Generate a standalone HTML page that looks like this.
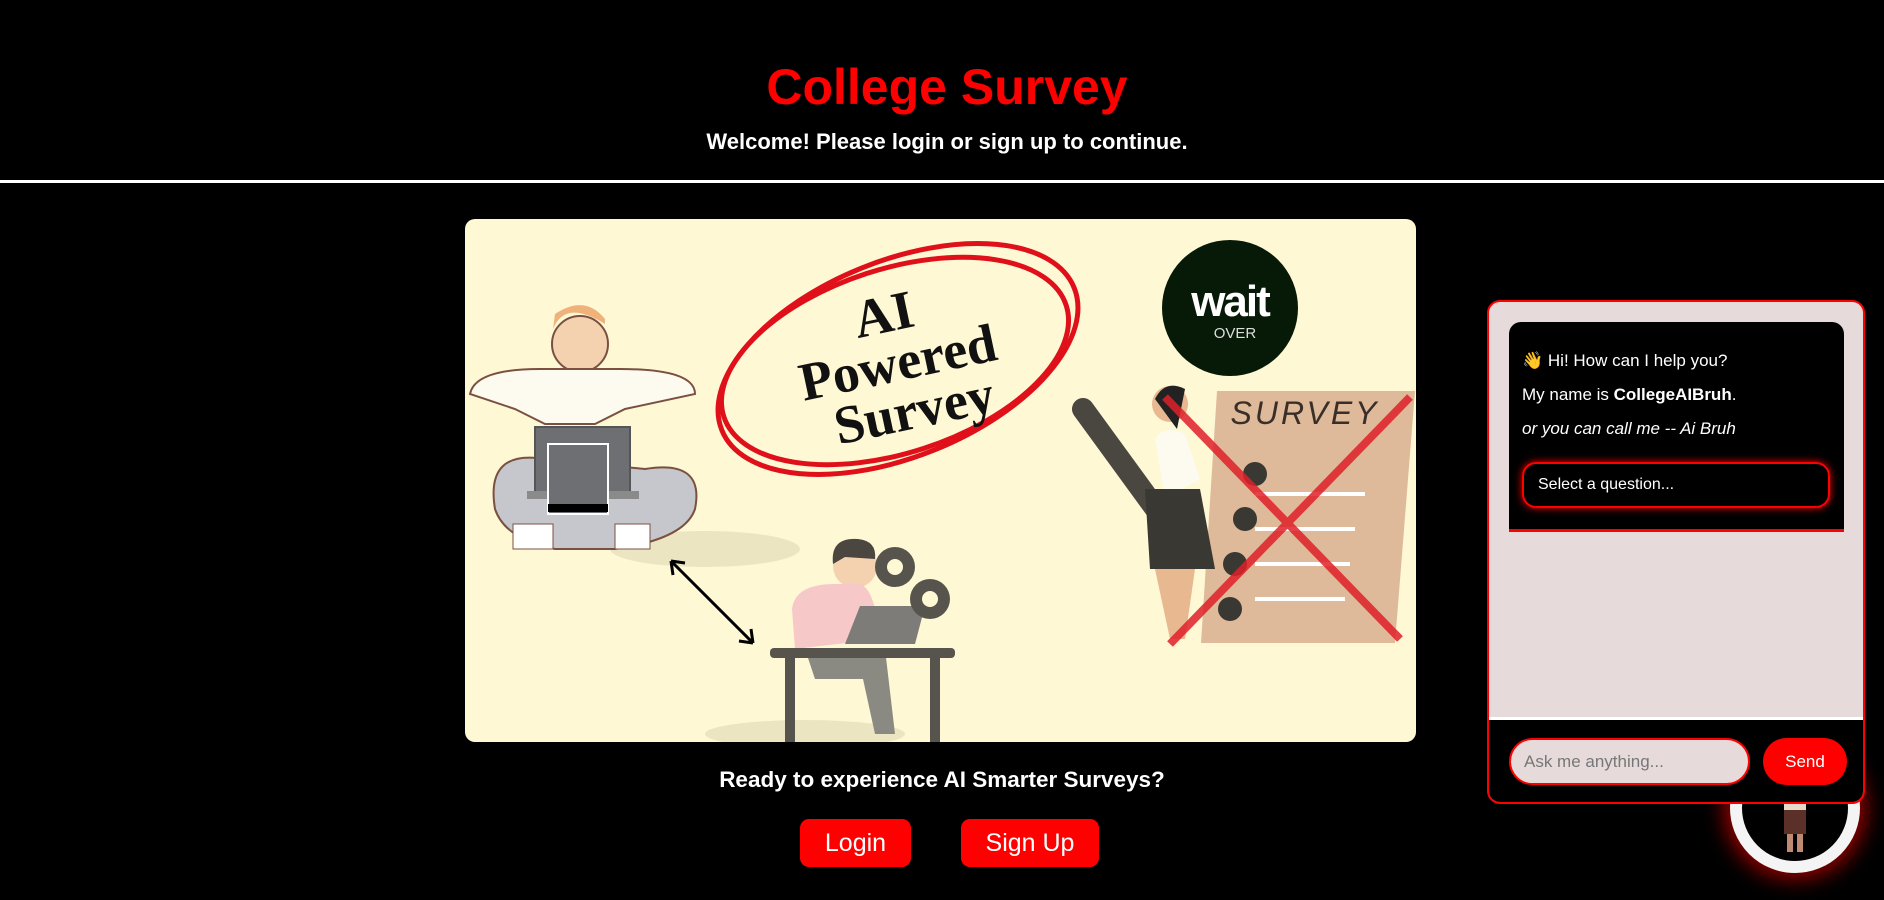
<!DOCTYPE html>
<html><head><meta charset="utf-8"><style>
*{margin:0;padding:0;box-sizing:border-box}
body{width:1884px;height:900px;background:#000;font-family:"Liberation Sans",Arial,sans-serif;position:relative;overflow:hidden;color:#fff}
.abs{position:absolute}
h1{position:absolute;left:5px;width:1884px;top:58px;text-align:center;color:#f00;font-size:50px;font-weight:bold}
.sub{left:5px;width:1884px;top:129px;text-align:center;font-size:22px;font-weight:bold}
.line{left:0;width:1884px;top:180px;height:3px;background:#fff}
.img{left:465px;top:219px;width:951px;height:523px;background:#fef8d5;border-radius:10px;overflow:hidden}
.ready{left:0;width:1884px;top:767px;text-align:center;font-size:22.5px;font-weight:bold}
.btn{background:#f00;color:#fff;font-size:25px;border-radius:9px;text-align:center;line-height:49px;height:48px;top:819px}
.chat{left:1487px;top:300px;width:378px;height:504px;border:2px solid #f00;border-radius:13px;background:#e6dada;overflow:hidden}
.inner{position:absolute;left:20px;top:20px;width:335px;height:210px;background:#000;border-radius:12px 12px 0 0;border-bottom:3px solid #f00;padding:22px 14px 0 13px;font-size:17px;line-height:34px}
.sel{margin-top:16px;height:46px;border:2px solid #f00;border-radius:14px;box-shadow:0 0 8px #f00;font-size:16px;line-height:42px;padding-left:14px}
.bot{position:absolute;left:0;top:415px;width:100%;height:90px;background:#000;border-top:3px solid #fff}
.inp{position:absolute;left:20px;top:18px;width:241px;height:47px;background:#e6dada;border:2px solid #f00;border-radius:24px;color:#777;font-size:17px;line-height:43px;padding-left:13px}
.send{position:absolute;left:274px;top:18px;width:84px;height:47px;background:#f00;border-radius:24px;font-size:17px;line-height:47px;text-align:center}
.av{left:1730px;top:743px;width:130px;height:130px;border-radius:50%;border:12px solid #f4f4f4;background:#000;box-shadow:0 0 20px 6px rgba(255,0,0,.6)}
</style></head><body>
<h1>College Survey</h1>
<div class="abs sub">Welcome! Please login or sign up to continue.</div>
<div class="abs line"></div>
<div class="abs img">
<svg width="951" height="523" viewBox="0 0 951 523">
<ellipse cx="240" cy="330" rx="95" ry="18" fill="#ece5c2"/>
<ellipse cx="340" cy="515" rx="100" ry="14" fill="#ece5c2"/>
<circle cx="115" cy="125" r="28" fill="#f4d2b0" stroke="#7a5040" stroke-width="2"/>
<path d="M88 110 Q100 80 140 105 L140 100 Q120 75 90 95Z" fill="#f0b27a"/>
<path d="M5 175 Q10 150 75 150 L155 150 Q230 150 230 175 L160 190 L130 205 L80 205 L50 190Z" fill="#fdfaf0" stroke="#7a5040" stroke-width="2"/>
<path d="M30 290 Q20 230 80 240 L180 250 Q240 240 230 290 Q220 320 150 330 L90 330 Q40 320 30 290Z" fill="#c5c7cc" stroke="#7a5040" stroke-width="2"/>
<rect x="70" y="208" width="95" height="65" fill="#6d6f72" stroke="#555" stroke-width="2"/>
<rect x="62" y="272" width="112" height="8" fill="#8a8a8a"/>
<rect x="83" y="225" width="60" height="70" fill="#6d6f72" stroke="#fff" stroke-width="2"/>
<rect x="83" y="285" width="60" height="8" fill="#000"/>
<rect x="48" y="305" width="40" height="25" fill="#fff" stroke="#7a5040"/>
<rect x="150" y="305" width="35" height="25" fill="#fff" stroke="#7a5040"/>
<path d="M206 342 L288 424 M206 342 L208 356 M206 342 L220 344 M288 424 L286 410 M288 424 L274 422" stroke="#000" stroke-width="3" fill="none"/>
<g fill="none" stroke="#e0101a" stroke-width="5">
<ellipse cx="433" cy="140" rx="190" ry="98" transform="rotate(-22 433 140)"/>
<ellipse cx="430" cy="142" rx="180" ry="92" transform="rotate(-18 430 142)"/>
</g>
<g font-family="Liberation Serif,serif" font-size="54" font-weight="bold" fill="#111" text-anchor="middle" transform="rotate(-12 430 140)">
<text x="428" y="112">AI</text>
<text x="432" y="162">Powered</text>
<text x="438" y="212">Survey</text>
</g>
<circle cx="765" cy="89" r="68" fill="#071a07"/>
<text x="765" y="97" text-anchor="middle" font-size="44" font-weight="bold" fill="#fff" letter-spacing="-2">wait</text>
<text x="770" y="119" text-anchor="middle" font-size="15" fill="#ddd">OVER</text>
<circle cx="390" cy="347" r="22" fill="#f4d2b0"/>
<path d="M368 345 Q365 318 393 320 Q412 322 410 340 L380 338Z" fill="#4b4640"/>
<path d="M327 390 Q330 365 370 365 L395 365 Q410 370 415 420 L330 430Z" fill="#f7c8c8"/>
<path d="M340 430 L420 430 L430 515 L410 515 L398 460 L350 460Z" fill="#8a8a82"/>
<rect x="305" y="429" width="185" height="10" rx="4" fill="#56544d"/>
<rect x="320" y="439" width="10" height="84" fill="#56544d"/>
<rect x="465" y="439" width="10" height="84" fill="#56544d"/>
<path d="M395 387 L460 387 L450 425 L380 425Z" fill="#7d7c78"/>
<g fill="#56544d"><circle cx="430" cy="348" r="20"/><circle cx="465" cy="380" r="20"/></g>
<g fill="#fef8d5"><circle cx="430" cy="348" r="8"/><circle cx="465" cy="380" r="8"/></g>
<path d="M752 172 L950 172 L930 424 L736 424Z" fill="#deba9a"/>
<text x="840" y="205" text-anchor="middle" font-size="32" fill="#3a2f28" letter-spacing="3" font-style="italic">SURVEY</text>
<g stroke="#fff" stroke-width="4"><line x1="790" y1="275" x2="900" y2="275"/><line x1="790" y1="310" x2="890" y2="310"/><line x1="790" y1="345" x2="885" y2="345"/><line x1="790" y1="380" x2="880" y2="380"/></g>
<path d="M618 190 L720 330" stroke="#4a4640" stroke-width="22" stroke-linecap="round"/>
<path d="M690 220 Q700 205 720 215 L735 260 L700 280Z" fill="#fdfaf0"/>
<path d="M680 270 L735 270 L750 350 L685 350Z" fill="#3a3832"/>
<path d="M690 350 L705 420 L720 420 L730 350Z" fill="#e8b891"/>
<circle cx="705" cy="185" r="18" fill="#e8b891"/>
<path d="M690 180 Q700 160 720 170 L712 210Z" fill="#222"/>
<g fill="#3a3832"><circle cx="790" cy="255" r="12"/><circle cx="780" cy="300" r="12"/><circle cx="770" cy="345" r="12"/><circle cx="765" cy="390" r="12"/></g>
<g stroke="#e0202a" stroke-width="8" opacity=".85"><line x1="700" y1="178" x2="935" y2="420"/><line x1="945" y1="178" x2="705" y2="425"/></g>
</svg>
</div>
<div class="abs ready">Ready to experience AI Smarter Surveys?</div>
<div class="abs btn" style="left:800px;width:111px">Login</div>
<div class="abs btn" style="left:961px;width:138px">Sign Up</div>
<div class="abs av"><svg width="106" height="106" viewBox="0 0 106 106"><circle cx="53" cy="24" r="9" fill="#b08060"/><rect x="42" y="33" width="22" height="24" fill="#e8d8c8"/><rect x="42" y="55" width="22" height="24" fill="#5a3028"/><rect x="45" y="79" width="6" height="18" fill="#c08a70"/><rect x="55" y="79" width="6" height="18" fill="#c08a70"/></svg></div>
<div class="abs chat">
<div class="inner">
<div>👋 Hi! How can I help you?</div>
<div>My name is <b>CollegeAIBruh</b>.</div>
<div><i>or you can call me -- Ai Bruh</i></div>
<div class="sel">Select a question...</div>
</div>
<div class="bot"><div class="inp">Ask me anything...</div><div class="send">Send</div></div>
</div>
</body></html>
